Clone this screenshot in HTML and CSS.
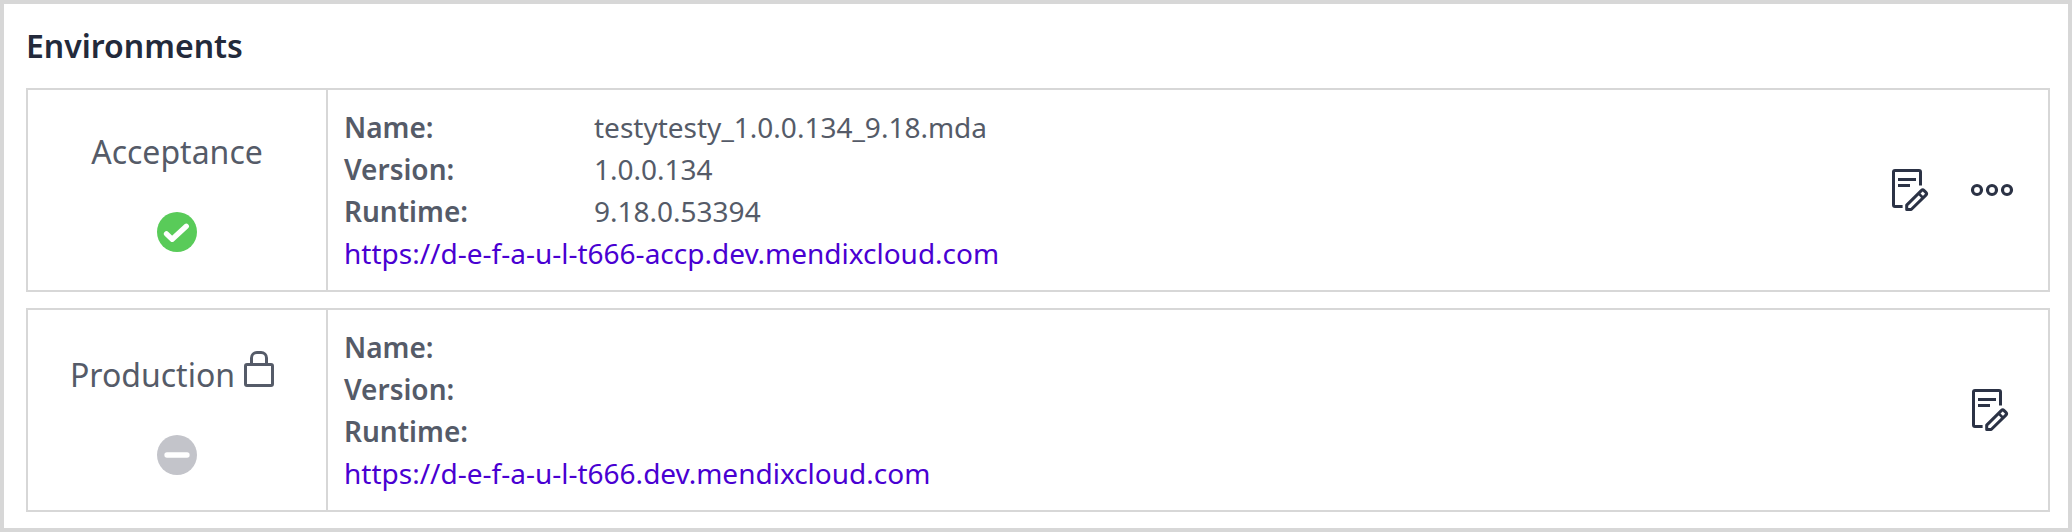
FILE: index.html
```html
<!DOCTYPE html>
<html lang="en">
<head>
<meta charset="utf-8">
<title>Environments</title>
<link rel="stylesheet" href="styles.css">
</head>
<body>
<svg class="sprite" aria-hidden="true">
  <symbol id="notes" viewBox="0 0 48 48">
    <g fill="none" stroke="currentColor" stroke-width="3">
      <path d="M32.500 19.500V6a1.500 1.500 0 0 0-1.500-1.500H7A1.500 1.500 0 0 0 5.500 6v33A1.500 1.500 0 0 0 7 40.500H14.600"/>
      <path d="M10 13.500h18M10 19.500h12"/>
      <path stroke-linejoin="round" d="M18.700 43.500v-4.400L33.300 24.600a2 2 0 0 1 2.800 0l1.800 1.800a2 2 0 0 1 0 2.800L23.200 43.500z"/>
      <path stroke-width="2.600" d="M30.600 27.400l4.600 4.600"/>
    </g>
  </symbol>
</svg>
<main class="panel">
  <h1 class="title">Environments</h1>
  <section class="env">
    <div class="env-status">
      <div class="env-name">Acceptance</div>
      <svg class="badge" viewBox="0 0 40 40"><circle class="ok" cx="20" cy="20" r="20"/><path class="mark" d="M9.500 21.800L15.200 27.300L29.300 14.200"/></svg>
    </div>
    <div class="env-info">
      <dl class="facts">
        <dt>Name:</dt><dd>testytesty_1.0.0.134_9.18.mda</dd>
        <dt>Version:</dt><dd>1.0.0.134</dd>
        <dt>Runtime:</dt><dd>9.18.0.53394</dd>
      </dl>
      <a class="link" href="#">https://d-e-f-a-u-l-t666-accp.dev.mendixcloud.com</a>
    </div>
    <div class="actions">
      <svg class="icon"><use href="#notes"/></svg>
      <svg class="icon" viewBox="0 0 48 48"><g fill="none" stroke="currentColor" stroke-width="3.200"><circle cx="9" cy="24" r="4.500"/><circle cx="24" cy="24" r="4.500"/><circle cx="39" cy="24" r="4.500"/></g></svg>
    </div>
  </section>
  <section class="env">
    <div class="env-status locked">
      <div class="env-name">Production<svg class="lock" viewBox="0 0 30 36"><g fill="none" stroke="currentColor" stroke-width="3"><rect x="1.500" y="13.500" width="27" height="21" rx="1.500"/><path d="M7.500 13.500V7a5.500 5.500 0 0 1 5.500-5.500h4A5.500 5.500 0 0 1 22.500 7v6.500"/></g></svg></div>
      <svg class="badge" viewBox="0 0 40 40"><circle class="idle" cx="20" cy="20" r="20"/><path class="mark" d="M10 20h20"/></svg>
    </div>
    <div class="env-info">
      <dl class="facts">
        <dt>Name:</dt><dd></dd>
        <dt>Version:</dt><dd></dd>
        <dt>Runtime:</dt><dd></dd>
      </dl>
      <a class="link" href="#">https://d-e-f-a-u-l-t666.dev.mendixcloud.com</a>
    </div>
    <div class="actions">
      <svg class="icon"><use href="#notes"/></svg>
    </div>
  </section>
</main>
</body>
</html>
```
FILE: styles.css
```css
* { box-sizing: border-box; }
body {
  margin: 0;
  font: 28px/42px "Noto Sans", sans-serif;
  color: #555b68;
}
.sprite { display: none; }
.panel {
  height: 532px;
  padding: 18px 18px 16px 22px;
  border: 4px solid #d7d7d7;
  background: #fff;
}
.title {
  margin: 0 0 18px;
  font-size: 32px;
  line-height: 48px;
  font-weight: 600;
  color: #232a3b;
}
.env {
  display: flex;
  height: 204px;
  border: 2px solid #d7d7d7;
}
.env + .env { margin-top: 16px; }
.env-status {
  display: flex;
  flex-direction: column;
  align-items: center;
  width: 300px;
  padding-top: 38px;
  border-right: 2px solid #d7d7d7;
}
.env-name {
  display: flex;
  gap: 9px;
  font-size: 32px;
  line-height: 48px;
}
.badge { width: 40px; height: 40px; margin-top: 36px; }
.locked { padding-top: 41px; }
.locked .env-name { padding-right: 10px; }
.lock { width: 30px; height: 36px; }
.ok { fill: #59cb59; }
.idle { fill: #c3c4ca; }
.mark {
  fill: none;
  stroke: #fff;
  stroke-width: 5.3;
  stroke-linecap: round;
  stroke-linejoin: round;
}
.env-info { flex: 1; padding: 16px; }
.facts {
  display: grid;
  grid-template-columns: 250px 1fr;
  grid-auto-rows: 42px;
  margin: 0;
}
.facts dt { font-weight: 600; }
.facts dd { margin: 0; }
.link { display: block; color: #4900d2; text-decoration: none; }
.actions {
  display: flex;
  align-items: center;
  gap: 32px;
  padding-right: 32px;
  color: #2b3245;
}
.icon { width: 48px; height: 48px; }
```
